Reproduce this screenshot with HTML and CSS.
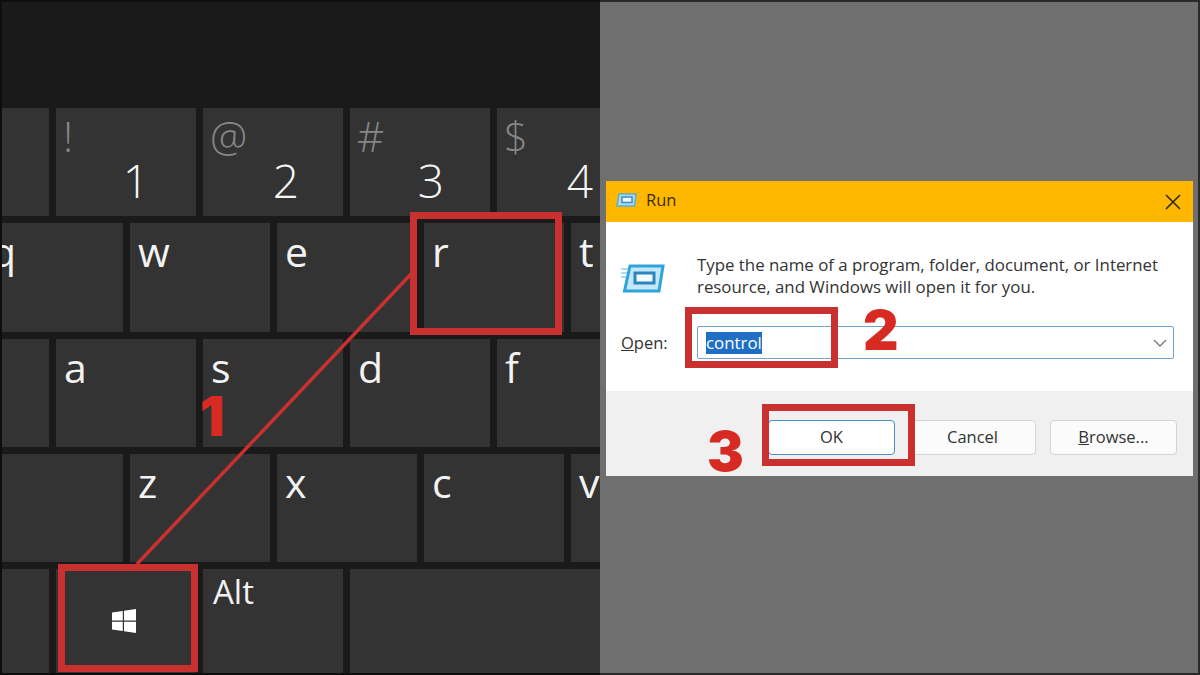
FILE: index.html
```html
<!DOCTYPE html>
<html>
	<head>
		<title>Run</title>
		<link rel="stylesheet" href="styles.css">
	</head>
	<body>
		<div class="page">
			<div class="keyboard">
				<div class="row row-a">
					<div class="key"></div>
					<div class="key"><span class="shift">!</span><span class="num">1</span></div>
					<div class="key"><span class="shift">@</span><span class="num">2</span></div>
					<div class="key"><span class="shift">#</span><span class="num">3</span></div>
					<div class="key"><span class="shift">$</span><span class="num">4</span></div>
				</div>
				<div class="row row-b">
					<div class="key letter">q</div>
					<div class="key letter">w</div>
					<div class="key letter">e</div>
					<div class="key letter">r</div>
					<div class="key letter">t</div>
				</div>
				<div class="row row-a">
					<div class="key"></div>
					<div class="key letter">a</div>
					<div class="key letter">s</div>
					<div class="key letter">d</div>
					<div class="key letter">f</div>
				</div>
				<div class="row row-b">
					<div class="key"></div>
					<div class="key letter">z</div>
					<div class="key letter">x</div>
					<div class="key letter">c</div>
					<div class="key letter">v</div>
				</div>
				<div class="row row-a">
					<div class="key"></div>
					<div class="key win-key">
						<svg class="win-logo" width="24" height="24" viewBox="0 0 24 24"><path fill="#fff" d="M0 3.500 10.800 2v9.400H0zM12 1.800 24 0v11.400H12zM0 12.800h10.800v9.300L0 20.600zM12 12.800h12V24l-12-1.700z"/></svg>
					</div>
					<div class="key letter small">Alt</div>
					<div class="key wide"></div>
				</div>
			</div>
			<div class="side">
				<div class="dialog">
					<div class="titlebar">
						<svg class="run-small" width="21" height="14" viewBox="0 0 21 14"><path fill="#a9dcf3" stroke="#5aaed0" stroke-width="1.500" d="M3 1h17l-1.500 12H1z"/><rect x="6" y="4" width="10" height="5.500" fill="#eaf8ff" stroke="#3d8fc0" stroke-width="1.500"/></svg>
						<span class="title">Run</span>
						<svg class="close" width="16" height="16" viewBox="0 0 16 16"><path stroke="#2e2a1c" stroke-width="1.600" fill="none" d="M1 1 15 15M15 1 1 15"/></svg>
					</div>
					<div class="content">
						<div class="intro">
							<svg class="run-big" width="44" height="30" viewBox="0 0 44 30"><path fill="#c4e8f9" stroke="#2ea3dc" stroke-width="3" d="M9 3h33l-4 25H3.500z"/><rect x="14" y="10" width="19" height="10" fill="#f4fbff" stroke="#2a86c0" stroke-width="3"/><path stroke="#8fd0ee" stroke-width="1.500" d="M0 6h7M0 10h6M0 14h5"/></svg>
							<p class="message">Type the name of a program, folder, document, or Internet resource, and Windows will open it for you.</p>
						</div>
						<div class="open-row">
							<label class="open-label"><u>O</u>pen:</label>
							<div class="combo">
								<span class="selected">control</span>
								<svg width="14" height="8" viewBox="0 0 14 8"><path fill="none" stroke="#777" stroke-width="1.300" d="M1 1l6 6 6-6"/></svg>
							</div>
						</div>
					</div>
					<div class="buttons">
						<div class="btn btn-ok">OK</div>
						<div class="btn">Cancel</div>
						<div class="btn"><u>B</u>rowse...</div>
					</div>
				</div>
			</div>
			<svg class="arrow" width="600" height="675" viewBox="0 0 600 675"><path d="M137 564 412 273" stroke="#c8312f" stroke-width="3.500"/></svg>
			<div class="mark mark-win"></div>
			<div class="mark mark-r"></div>
			<div class="mark mark-open"></div>
			<div class="mark mark-ok"></div>
			<span class="step step-1">1</span>
			<span class="step step-2">2</span>
			<span class="step step-3">3</span>
		</div>
	</body>
</html>
```
FILE: styles.css
```css
*
{
	box-sizing:border-box;
}
html,body
{
	margin:0;
	height:100%;
	overflow:hidden;
}
body
{
	font-family:"Open Sans",sans-serif;
}
.page
{
	position:relative;
	display:flex;
	width:1200px;
	height:675px;
	background:#6f6f6f;
}
.keyboard
{
	width:600px;
	height:675px;
	padding-top:106px;
	background:#1a1a1a;
	border:solid #0e0e0e 2px;
	border-right:0;
	overflow:hidden;
	display:flex;
	flex-direction:column;
	gap:7px;
}
.row
{
	display:flex;
	gap:7px;
	height:108.300px;
	flex:none;
}
.row-a
{
	margin-left:-93px;
}
.row-b
{
	margin-left:-19px;
}
.key
{
	position:relative;
	width:140px;
	flex:none;
	background:#333;
	color:#f2f2f2;
}
.letter
{
	padding:4px 0 0 8px;
	font-size:41px;
	line-height:48px;
}
.small
{
	padding:5px 0 0 10px;
	font-size:33px;
	line-height:36px;
}
.wide
{
	width:260px;
}
.shift
{
	position:absolute;
	left:7px;
	top:0;
	font-size:42px;
	line-height:56px;
	font-weight:300;
	color:#868686;
}
.num
{
	position:absolute;
	right:47px;
	bottom:11px;
	font-size:46px;
	line-height:50px;
	font-weight:300;
	color:#f5f5f5;
}
.key:nth-child(3) .num
{
	right:44px;
}
.key:nth-child(4) .num
{
	right:46px;
}
.key:nth-child(5) .num
{
	right:44px;
}
.win-key
{
	display:flex;
	align-items:center;
	justify-content:center;
}
.win-logo
{
	margin:0 4px 4px 0;
}
.side
{
	flex:1;
	padding:179px 5px 0 6px;
	border:solid #2a2a2a 2px;
	border-left:0;
}
.dialog
{
	height:295px;
	background:#fff;
	display:flex;
	flex-direction:column;
}
.titlebar
{
	height:41px;
	flex:none;
	background:#ffb700;
	display:flex;
	align-items:center;
	padding:0 12px 4px 10px;
	color:#3a2c00;
	font-size:16.500px;
}
.title
{
	margin-left:9px;
}
.close
{
	margin-left:auto;
	margin-top:4px;
}
.content
{
	height:169px;
	flex:none;
	padding:32px 19px 0 15px;
}
.intro
{
	display:flex;
	gap:32px;
	height:64px;
}
.run-big
{
	margin-top:9px;
	flex:none;
}
.message
{
	margin:0;
	font-size:16.850px;
	line-height:22px;
	color:#333;
}
.open-row
{
	display:flex;
	align-items:center;
	margin-top:8px;
}
.open-label
{
	width:76px;
	font-size:16.500px;
	color:#333;
}
.combo
{
	flex:1;
	height:33px;
	border:solid #6fa3c8 1.500px;
	border-radius:2px;
	display:flex;
	align-items:center;
	justify-content:space-between;
	padding:0 6px 0 8px;
}
.selected
{
	background:#1f6fc4;
	color:#fff;
	font-size:16.850px;
	line-height:22px;
}
.buttons
{
	flex:1;
	background:#f0f0f0;
	display:flex;
	justify-content:flex-end;
	gap:14px;
	padding:29px 16px 0 0;
}
.btn
{
	width:127px;
	height:35px;
	background:#fbfbfb;
	border:solid #d4d4d4 1px;
	border-radius:4px;
	font-size:16.500px;
	line-height:32px;
	text-align:center;
	color:#333;
}
.btn-ok
{
	background:#fff;
	border:solid #4a90c0 1.500px;
}
.arrow
{
	position:absolute;
	left:0;
	top:0;
	pointer-events:none;
}
.mark
{
	position:absolute;
	border:solid #c8312f 7px;
}
.mark-win
{
	left:58px;
	top:564px;
	width:140px;
	height:108px;
}
.mark-r
{
	left:410px;
	top:212px;
	width:152px;
	height:123px;
}
.mark-open
{
	left:685px;
	top:307px;
	width:153px;
	height:61px;
}
.mark-ok
{
	left:762px;
	top:404px;
	width:153px;
	height:62px;
}
.step
{
	position:absolute;
	font-family:"Inter",sans-serif;
	font-weight:900;
	font-size:55px;
	line-height:55px;
	color:#d62a22;
}
.step-1
{
	left:200px;
	top:389px;
}
.step-2
{
	left:863px;
	top:303px;
}
.step-3
{
	left:707px;
	top:424px;
}
```
